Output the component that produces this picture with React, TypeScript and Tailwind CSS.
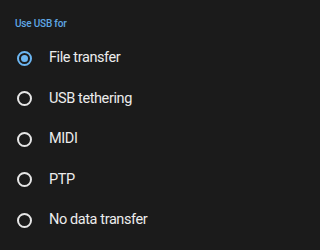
const options = ["File transfer", "USB tethering", "MIDI", "PTP", "No data transfer"];

function Radio({ checked }: { checked: boolean }) {
  return (
    <span
      className={
        checked
          ? "flex h-[15px] w-[15px] items-center justify-center rounded-full border-2 border-[#6cb6f2]"
          : "flex h-[15px] w-[15px] items-center justify-center rounded-full border-2 border-[#e6e6e6]"
      }
    >
      {checked && <span className="h-[7px] w-[7px] rounded-full bg-[#6cb6f2]" />}
    </span>
  );
}

export default function App() {
  const selected = 0;
  return (
    <div className="h-[250px] w-full bg-[#1b1b1b] font-['Roboto',sans-serif]">
      <p className="pl-[15px] pt-[18px] text-[10px] font-medium leading-[12px] tracking-[-0.2px] text-[#5fa8e6]">
        Use USB for
      </p>
      <div className="mt-[8px]">
        {options.map((label, i) => (
          <div key={label} className="flex h-[40.5px] items-center pl-[17px]">
            <Radio checked={i === selected} />
            <span className="ml-[17px] text-[14.5px] tracking-[-0.4px] text-[#ececec]">{label}</span>
          </div>
        ))}
      </div>
    </div>
  );
}
